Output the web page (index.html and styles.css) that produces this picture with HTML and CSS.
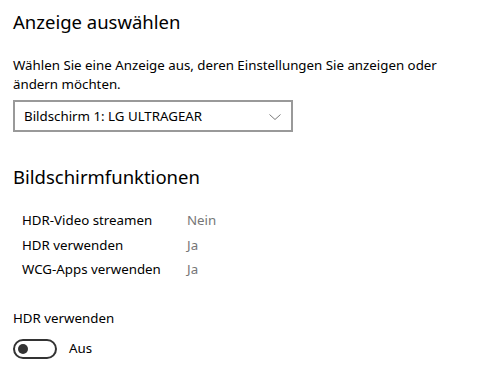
FILE: index.html
```html
<!DOCTYPE html>
<html lang="de">
<head>
<meta charset="utf-8">
<link rel="stylesheet" href="styles.css">
</head>
<body>
<main class="page">
  <h1 class="title">Anzeige auswählen</h1>
  <p class="desc">Wählen Sie eine Anzeige aus, deren Einstellungen Sie anzeigen oder ändern möchten.</p>
  <div class="select">
    <span class="select-text">Bildschirm 1: LG ULTRAGEAR</span>
    <svg class="chevron" width="12" height="6" viewBox="0 0 12 6"><path d="M0.5 0.5 L6 5.5 L11.5 0.5" fill="none" stroke="#7a7a7a" stroke-width="1"/></svg>
  </div>
  <h2 class="title section">Bildschirmfunktionen</h2>
  <dl class="props">
    <dt>HDR-Video streamen</dt><dd>Nein</dd>
    <dt>HDR verwenden</dt><dd>Ja</dd>
    <dt>WCG-Apps verwenden</dt><dd>Ja</dd>
  </dl>
  <div class="toggle-label">HDR verwenden</div>
  <div class="toggle-row">
    <span class="toggle"><span class="knob"></span></span>
    <span class="toggle-state">Aus</span>
  </div>
</main>
</body>
</html>
```

FILE: styles.css
```css
html, body {
  margin: 0;
  padding: 0;
  background: #ffffff;
}
body {
  font-family: "Segoe UI", "Noto Sans", "Open Sans", sans-serif;
  color: #000000;
}
.page {
  padding: 0 13px;
  display: flex;
  flex-direction: column;
  align-items: flex-start;
}
.title {
  font-size: 18.5px;
  line-height: 28px;
  font-weight: 400;
  margin: 8px 0 0 0;
}
.desc {
  font-size: 13.3px;
  line-height: 19px;
  margin: 20px 0 0 0;
  width: 440px;
}
.select {
  margin-top: 6px;
  box-sizing: border-box;
  width: 280px;
  height: 32px;
  border: 2px solid #999999;
  display: flex;
  align-items: center;
  justify-content: space-between;
  padding: 0 10px 0 9px;
  font-size: 13.3px;
}
.select-text {
  line-height: 28px;
}
.chevron {
  display: block;
  margin-top: 1px;
}
.section {
  margin-top: 31px;
}
.props {
  margin: 17px 0 0 9px;
  display: grid;
  grid-template-columns: 165px auto;
  grid-auto-rows: 24.5px;
  font-size: 13.3px;
  line-height: 24.5px;
}
.props dt, .props dd {
  margin: 0;
}
.props dd {
  color: #767676;
}
.toggle-label {
  margin-top: 27px;
  font-size: 13.3px;
  line-height: 19px;
}
.toggle-row {
  margin-top: 11px;
  display: flex;
  align-items: center;
  gap: 12px;
  font-size: 13.3px;
  line-height: 19px;
}
.toggle {
  box-sizing: border-box;
  width: 44px;
  height: 20px;
  border: 2px solid #333333;
  border-radius: 10px;
  display: flex;
  align-items: center;
  padding: 0 3px;
}
.knob {
  width: 10px;
  height: 10px;
  border-radius: 50%;
  background: #333333;
}
```
